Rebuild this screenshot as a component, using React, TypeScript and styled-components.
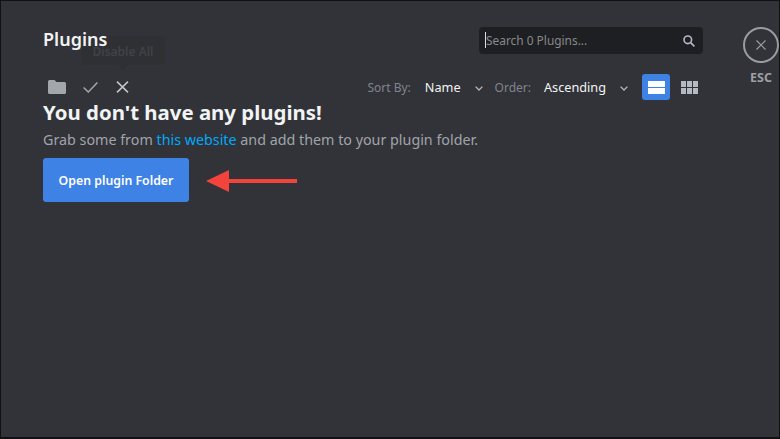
import * as React from 'react';
import styled, { createGlobalStyle } from 'styled-components';

const GlobalStyle = createGlobalStyle`
  html, body {
    margin: 0;
    padding: 0;
    width: 780px;
    height: 439px;
    overflow: hidden;
    background: #313338;
    font-family: "Noto Sans", "Open Sans", sans-serif;
  }
`;

const Page = styled.div`
  position: relative;
  box-sizing: border-box;
  width: 780px;
  height: 439px;
  display: grid;
  grid-template-columns: 702px 1fr;
  background: #313338;
  border: solid #101113;
  border-width: 1px 1px 2px 1px;
`;

const Content = styled.main`
  padding: 26px 0 0 42px;
  display: flex;
  flex-direction: column;
  min-width: 0;
`;

const TopRow = styled.div`
  display: flex;
  justify-content: space-between;
  align-items: flex-start;
  height: 42px;
`;

// sits above the faded tooltip, the tooltip runs behind the last letters
const Title = styled.h2`
  position: relative;
  z-index: 1;
  margin: 0;
  font-size: 18px;
  line-height: 24px;
  font-weight: 600;
  color: #f2f3f5;
`;

const Search = styled.div`
  width: 224px;
  height: 27px;
  box-sizing: border-box;
  display: flex;
  align-items: center;
  justify-content: space-between;
  padding: 0 7px 0 6px;
  border-radius: 4px;
  background: #1e1f22;
`;

const SearchText = styled.span`
  font-size: 11.9px;
  color: #87898c;
  border-left: 1px solid #dbdee1;
  line-height: 16px;
  margin-top: -1px;
`;

const ToolRow = styled.div`
  display: flex;
  justify-content: space-between;
  align-items: center;
  height: 36px;
`;

const Actions = styled.div`
  display: flex;
  align-items: center;
  padding-left: 5px;
`;

const ActionIcon = styled.svg<{ $gap?: number }>`
  display: block;
  margin-left: ${p => p.$gap || 0}px;
`;

const Controls = styled.div`
  display: flex;
  align-items: center;
`;

const Label = styled.span<{ $gap: number }>`
  font-size: 12px;
  color: #80848e;
  margin-right: ${p => p.$gap}px;
`;

const Value = styled.span`
  font-size: 12.7px;
  color: #f2f3f5;
`;

const Caret = styled.svg<{ $after: number }>`
  width: 8px;
  height: 5px;
  margin: 2px ${p => p.$after}px 0 14px;
  color: #b5bac1;
`;

const ViewButton = styled.div<{ $active?: boolean }>`
  width: 28px;
  height: 26px;
  display: flex;
  align-items: center;
  justify-content: center;
  border-radius: 3px;
  margin-left: ${p => (p.$active ? '0' : '5px')};
  background: ${p => (p.$active ? '#3e82e5' : 'transparent')};
  color: ${p => (p.$active ? '#fff' : '#b5bac1')};
`;

const Heading = styled.h1`
  margin: -7px 0 0;
  font-size: 20.4px;
  line-height: 28px;
  font-weight: 700;
  color: #f2f3f5;
`;

const Sub = styled.p`
  margin: 3px 0 0;
  font-size: 14.3px;
  line-height: 22px;
  color: #a0a4aa;
`;

const SiteLink = styled.a`
  color: #00a8fc;
`;

const OpenButton = styled.button`
  align-self: flex-start;
  margin-top: 7px;
  width: 146px;
  height: 44px;
  border: 0;
  border-radius: 3px;
  background: #3e82e5;
  color: #fff;
  font: 600 12.3px "Noto Sans", sans-serif;
`;

const Tooltip = styled.div`
  position: absolute;
  left: 80px;
  top: 35px;
  width: 84px;
  height: 29px;
  padding-top: 2px;
  box-sizing: border-box;
  display: flex;
  align-items: center;
  justify-content: center;
  border-radius: 4px;
  background: #2f3034;
  color: #404247;
  font-size: 12px;
  font-weight: 600;

  &::after {
    content: '';
    position: absolute;
    left: 37px;
    top: 29px;
    border: 5px solid transparent;
    border-top-color: #2f3034;
  }
`;

const Arrow = styled.svg`
  position: absolute;
  left: 205px;
  top: 169px;
  width: 92px;
  height: 22px;
`;

const EscColumn = styled.aside`
  display: flex;
  flex-direction: column;
  align-items: center;
  padding: 26px 0 0 40px;
`;

const CloseCircle = styled.div`
  box-sizing: border-box;
  flex: none;
  width: 36px;
  height: 36px;
  display: flex;
  align-items: center;
  justify-content: center;
  border: 2px solid #9a9ca1;
  border-radius: 50%;
  color: #9a9ca1;
`;

const EscLabel = styled.span`
  margin-top: 6px;
  font-size: 12.5px;
  font-weight: 700;
  color: #9c9fa5;
`;

export default function App() {
  return (
    <Page>
      <GlobalStyle />
      <Content>
        <TopRow>
          <Title>Plugins</Title>
          <Search>
            <SearchText>Search 0 Plugins...</SearchText>
            <svg width="14" height="14" viewBox="0 0 14 14" fill="none" stroke="#b5bac1" strokeWidth="1.6">
              <circle cx="5.8" cy="5.8" r="3.8" />
              <path d="M8.6 8.6 12.4 12.4" />
            </svg>
          </Search>
        </TopRow>
        <ToolRow>
          <Actions>
            <ActionIcon width="18" height="14" viewBox="0 0 18 14" fill="#a3a6aa">
              <path d="M1.5 0h5l2 2h8A1.500 1.500 0 0 1 18 3.500v9a1.500 1.500 0 0 1-1.500 1.500h-15A1.500 1.500 0 0 1 0 12.500v-11A1.500 1.500 0 0 1 1.500 0z" />
            </ActionIcon>
            <ActionIcon $gap={17} width="15" height="11" viewBox="0 0 15 11" fill="none" stroke="#a3a6aa" strokeWidth="1.500">
              <path d="M.6 5.500l4.700 4.500L14.400.6" />
            </ActionIcon>
            <ActionIcon $gap={18} width="13" height="12" viewBox="0 0 13 12" fill="none" stroke="#c4c7ca" strokeWidth="1.500">
              <path d="M1 .6l11 10.800M12 .6 1 11.400" />
            </ActionIcon>
          </Actions>
          <Controls>
            <Label $gap={14}>Sort By:</Label>
            <Value>Name</Value>
            <Caret $after={12} viewBox="0 0 8 5" fill="none" stroke="currentColor" strokeWidth="1.300">
              <path d="M.6.6 4 4 7.400.6" />
            </Caret>
            <Label $gap={13}>Order:</Label>
            <Value>Ascending</Value>
            <Caret $after={14} viewBox="0 0 8 5" fill="none" stroke="currentColor" strokeWidth="1.300">
              <path d="M.6.6 4 4 7.400.6" />
            </Caret>
            <ViewButton $active>
              <svg width="17" height="13" viewBox="0 0 17 13" fill="currentColor">
                <rect width="17" height="6" />
                <rect y="7" width="17" height="6" />
              </svg>
            </ViewButton>
            <ViewButton>
              <svg width="17" height="13" viewBox="0 0 17 13" fill="currentColor">
                <rect width="5" height="6" />
                <rect x="6" width="5" height="6" />
                <rect x="12" width="5" height="6" />
                <rect y="7" width="5" height="6" />
                <rect x="6" y="7" width="5" height="6" />
                <rect x="12" y="7" width="5" height="6" />
              </svg>
            </ViewButton>
          </Controls>
        </ToolRow>
        <Heading>You don't have any plugins!</Heading>
        <Sub>
          Grab some from <SiteLink>this website</SiteLink> and add them to your plugin folder.
        </Sub>
        <OpenButton>Open plugin Folder</OpenButton>
      </Content>
      <EscColumn>
        <CloseCircle>
          <svg width="10" height="10" viewBox="0 0 10 10" fill="none" stroke="currentColor" strokeWidth="1.200">
            <path d="M.5.500l9 9M9.500.500l-9 9" />
          </svg>
        </CloseCircle>
        <EscLabel>ESC</EscLabel>
      </EscColumn>
      <Tooltip>Disable All</Tooltip>
      <Arrow viewBox="0 0 92 22">
        <path d="M0 11 23 0v9h68v4H23v9z" fill="#f4433c" />
      </Arrow>
    </Page>
  );
}
